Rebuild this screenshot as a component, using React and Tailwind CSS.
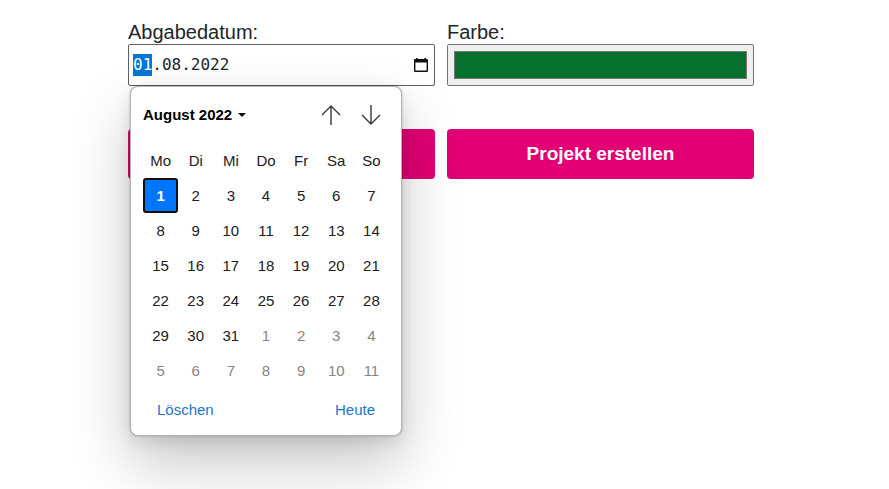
import { useEffect, useRef } from "react";

const weekdays = ["Mo", "Di", "Mi", "Do", "Fr", "Sa", "So"];

// Six weeks starting on Monday, 1 August 2022; the last days belong to September.
const weeks = Array.from({ length: 6 }, (_, week) =>
  Array.from({ length: 7 }, (_, day) => {
    const n = week * 7 + day + 1;
    return n > 31 ? { day: n - 31, outside: true } : { day: n, outside: false };
  })
);

function dayClass({ day, outside }) {
  if (outside) return "block h-[35px] w-full text-[#858585]";
  if (day === 1)
    return "block h-[35px] w-full rounded-[3px] border-2 border-[#101010] bg-[#0075ff] font-bold text-white";
  return "block h-[35px] w-full text-[#202020]";
}

function CalendarIcon() {
  return (
    <svg className="h-4 w-4" viewBox="0 0 16 16" aria-hidden="true">
      <path
        d="M3 1h1.600v1h6.800V1H13v1h1a1 1 0 0 1 1 1v11a1 1 0 0 1-1 1H2a1 1 0 0 1-1-1V3a1 1 0 0 1 1-1h1zM2.400 5.500v8.100h11.200V5.500z"
        fill="#101010"
        fillRule="evenodd"
      />
    </svg>
  );
}

function Arrow({ down }) {
  return (
    <svg
      className="h-[22px] w-[22px]"
      viewBox="0 0 22 22"
      fill="none"
      stroke="#383838"
      strokeWidth="1.4"
      aria-hidden="true"
    >
      <path d={down ? "M11 1v19M2 11l9 9 9-9" : "M11 21V2M2 11l9-9 9 9"} />
    </svg>
  );
}

function DatePicker() {
  return (
    <div
      role="dialog"
      aria-label="Kalender"
      className="absolute top-full left-0.5 z-10 w-[272px] rounded-lg border border-[#b4b4b4] bg-white px-3 pt-2.5 pb-[15px] text-[15px] leading-5 shadow-[0_0_2px_rgba(0,0,0,0.3),0_6px_16px_rgba(0,0,0,0.1),0_28px_60px_rgba(0,0,0,0.22)]"
    >
      <div className="mb-2.5 flex h-9 items-center justify-between">
        <button type="button" className="flex items-center gap-1.5 font-bold text-black">
          August 2022
          <svg className="h-1 w-2" viewBox="0 0 8 4" aria-hidden="true">
            <path d="M0 0h8L4 4z" fill="#101010" />
          </svg>
        </button>
        <div className="flex gap-[18px] pr-[7px]">
          <button type="button" aria-label="Vorheriger Monat">
            <Arrow />
          </button>
          <button type="button" aria-label="Nächster Monat">
            <Arrow down />
          </button>
        </div>
      </div>
      <table className="w-full table-fixed border-collapse text-center">
        <thead>
          <tr className="h-[35px]">
            {weekdays.map((name) => (
              <th key={name} scope="col" className="p-0 font-normal text-[#202020]">
                {name}
              </th>
            ))}
          </tr>
        </thead>
        <tbody>
          {weeks.map((week, i) => (
            <tr key={i}>
              {week.map((cell) => (
                <td key={cell.day} className="p-0">
                  <button type="button" className={dayClass(cell)}>
                    {cell.day}
                  </button>
                </td>
              ))}
            </tr>
          ))}
        </tbody>
      </table>
      <div className="mt-3 flex justify-between px-3.5 text-[#1a76cc]">
        <button type="button">Löschen</button>
        <button type="button">Heute</button>
      </div>
    </div>
  );
}

export default function App() {
  const dateInput = useRef(null);

  // The day part is the active segment of the date.
  useEffect(() => {
    dateInput.current.focus();
    dateInput.current.setSelectionRange(0, 2);
  }, []);

  return (
    <main className="min-h-screen overflow-hidden bg-white pt-5 pr-[135px] pl-32 font-['Liberation_Sans',Arial,sans-serif] text-[#212529]">
      <form className="grid grid-cols-2 gap-x-3 gap-y-[43px]">
        <div>
          <label htmlFor="date" className="block text-xl leading-6">
            Abgabedatum:
          </label>
          <div className="relative">
            <div className="flex h-[42px] items-center rounded-xs border border-[#606060] bg-white pr-[5px] pl-1">
              <input
                ref={dateInput}
                id="date"
                type="text"
                defaultValue="01.08.2022"
                className="h-[22px] min-w-0 flex-1 font-['DejaVu_Sans_Mono',monospace] text-base leading-[22px] text-[#212529] outline-none selection:bg-[#0078d7] selection:text-white"
              />
              <button type="button" aria-label="Kalender öffnen">
                <CalendarIcon />
              </button>
            </div>
            <DatePicker />
          </div>
        </div>
        <div>
          <label htmlFor="color" className="block text-xl leading-6">
            Farbe:
          </label>
          <input
            id="color"
            type="color"
            defaultValue="#08702d"
            className="block h-[42px] w-full rounded-xs border border-[#767676] bg-[#efefef] p-1.5 [&::-webkit-color-swatch]:rounded-none [&::-webkit-color-swatch]:border [&::-webkit-color-swatch]:border-[#777777] [&::-webkit-color-swatch-wrapper]:p-0"
          />
        </div>
        <button
          type="button"
          aria-label="Abbrechen"
          className="h-[50px] rounded bg-[#e20074]"
        />
        <button
          type="submit"
          className="h-[50px] rounded bg-[#e20074] text-[19px] leading-6 font-bold text-white"
        >
          Projekt erstellen
        </button>
      </form>
    </main>
  );
}
